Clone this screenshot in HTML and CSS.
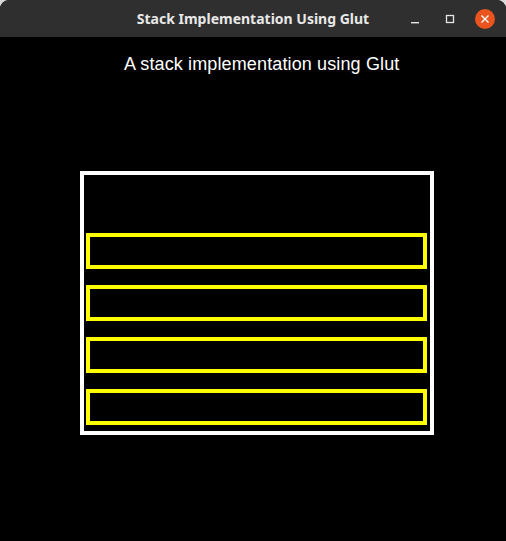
FILE: index.html
```html
<!DOCTYPE html>
<html>
<head>
<meta charset="utf-8">
<link rel="stylesheet" href="styles.css">
</head>
<body>
<div class="window">
  <div class="titlebar">
    <div class="title">Stack Implementation Using Glut</div>
    <div class="controls">
      <span class="btn min"><svg width="10" height="10" viewBox="0 0 10 10"><rect x="1" y="8" width="8" height="1.4" fill="#e6e6e6"/></svg></span>
      <span class="btn max"><svg width="10" height="10" viewBox="0 0 10 10"><rect x="1.5" y="1.5" width="7" height="7" fill="none" stroke="#e6e6e6" stroke-width="1.3"/></svg></span>
      <span class="btn close"><svg width="10" height="10" viewBox="0 0 10 10"><path d="M1.5 1.5 L8.5 8.5 M8.5 1.5 L1.5 8.5" stroke="#fff" stroke-width="1.4" fill="none"/></svg></span>
    </div>
  </div>
  <div class="canvas">
    <div class="heading">A stack implementation using Glut</div>
    <div class="stack">
      <div class="item"></div>
      <div class="item"></div>
      <div class="item"></div>
      <div class="item"></div>
    </div>
  </div>
</div>
</body>
</html>
```
FILE: styles.css
```css
html, body {
  margin: 0;
  padding: 0;
  background: #d9d9d9;
}
.window {
  width: 506px;
  height: 541px;
  display: flex;
  flex-direction: column;
  overflow: hidden;
  border-radius: 9px 9px 0 0;
  background: #000;
}
.titlebar {
  height: 37px;
  flex: none;
  background: #2f2f2f;
  display: flex;
  align-items: center;
  position: relative;
}
.title {
  flex: 1;
  text-align: center;
  font-family: "Noto Sans", "DejaVu Sans", sans-serif;
  font-weight: bold;
  font-size: 14px;
  color: #e8e8e8;
}
.controls {
  position: absolute;
  right: 11px;
  top: 9px;
  display: flex;
  gap: 15px;
  align-items: center;
}
.btn {
  width: 20px;
  height: 20px;
  display: flex;
  align-items: center;
  justify-content: center;
}
.btn.close {
  background: #e9541f;
  border-radius: 50%;
}
.canvas {
  flex: 1;
  background: #000;
  display: flex;
  flex-direction: column;
}
.heading {
  margin: 17px 0 0 124px;
  font-family: "Liberation Sans", Arial, sans-serif;
  font-size: 18px;
  letter-spacing: 0.13px;
  line-height: 21px;
  color: #fff;
}
.stack {
  margin: 96px 0 0 80px;
  width: 354px;
  height: 264px;
  border: 4px solid #fff;
  padding: 58px 3px 6px 2px;
  box-sizing: border-box;
  display: flex;
  flex-direction: column;
  gap: 16px;
}
.stack .item {
  height: 36px;
  border: 4px solid #ffff00;
  box-sizing: border-box;
  flex: none;
}
```
